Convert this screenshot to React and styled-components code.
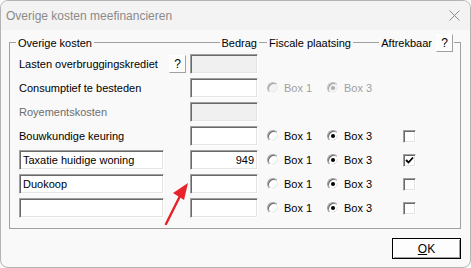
import React from "react";
import styled, { createGlobalStyle, css } from "styled-components";

const Global = createGlobalStyle`
  html, body { margin: 0; padding: 0; background: #f9f9f9; }
  * { box-sizing: border-box; }
`

const Window = styled.div`
  position: relative;
  width: 471px;
  height: 268px;
  border: 1px solid #b4b4b4;
  border-radius: 8px;
  background: #f9f9f9;
  overflow: hidden;
  font-family: "Liberation Sans", Arial, sans-serif;
  font-size: 11px;
  color: #000;
`
const TitleBar = styled.div`
  height: 29px;
  display: flex;
  align-items: center;
  justify-content: space-between;
  padding: 0 10px 0 5px;
  background: #f3f3f3;
`
const Title = styled.span`
  font-size: 12px;
  color: #8a8a8a;
`
const Content = styled.div`
  padding: 4px 9px 0 8px;
`
const GroupHeader = styled.div`
  display: flex;
  align-items: center;
  height: 17px;
`
const HeaderLeft = styled.div`
  width: 248px;
  display: flex;
  align-items: center;
  height: 100%;
`
const Corner = styled.div`
  align-self: flex-end;
  width: 7px;
  height: 9px;
  border-top: 1px solid #a0a0a0;
  ${p => p.side === "left" ? "border-left: 1px solid #a0a0a0; margin-right: 2px;" : "border-right: 1px solid #a0a0a0; margin-left: 1px;"}
`
const Line = styled.div`
  height: 1px;
  background: #a0a0a0;
  flex: ${p => p.width ? "none" : 1};
  width: ${p => p.width ? p.width + "px" : "auto"};
  margin: 0 2px;
`
const HeadLabel = styled.span`
  white-space: nowrap;
`
const Raised = css`
  border: 1px solid;
  border-color: #fff #a0a0a0 #a0a0a0 #fff;
  background: #fdfdfd;
  font: inherit;
  color: #000;
  padding: 0;
  display: flex;
  align-items: center;
  justify-content: center;
`
const HelpButton = styled.button`
  ${Raised}
  width: 17px;
  height: 18px;
  margin-left: ${p => p.left || 0}px;
  font-size: 12px;
`
const GroupBody = styled.div`
  border: 1px solid #a0a0a0;
  border-top: none;
  padding: 3px 0 10px 9px;
  display: flex;
  flex-direction: column;
  gap: 4px;
`
const Row = styled.div`
  display: grid;
  grid-template-columns: 171px 68px 60px 76px auto;
  align-items: center;
  height: 20px;
`
const LabelCell = styled.div`
  display: flex;
  align-items: center;
  padding-right: 4px;
  color: ${p => p.disabled ? "#6d6d6d" : "#000"};
`
const Sunken = css`
  border: 1px solid;
  border-color: #a0a0a0 #fff #fff #a0a0a0;
  box-shadow: inset 1px 1px 0 #696969, inset -1px -1px 0 #e3e3e3;
`
const Field = styled.input`
  ${Sunken}
  width: ${p => p.w}px;
  height: 20px;
  padding: 2px 3px 2px 3px;
  font: inherit;
  color: #000;
  outline: none;
  text-align: ${p => p.right ? "right" : "left"};
  background: ${p => p.disabled ? "#f0f0f0" : "#fff"};
`
const OptionCell = styled.label`
  display: flex;
  align-items: center;
  gap: 5px;
  padding-left: 9px;
  color: ${p => p.disabled ? "#a0a0a0" : "#000"};
`
const Radio = styled.span`
  ${Sunken}
  width: 12px;
  height: 12px;
  border-radius: 50%;
  background: ${p => p.disabled ? "#f0f0f0" : "#fff"};
  display: flex;
  align-items: center;
  justify-content: center;
  opacity: ${p => p.disabled ? 0.6 : 1};
  &::after {
    content: "";
    display: ${p => p.checked ? "block" : "none"};
    width: 4px;
    height: 4px;
    border-radius: 50%;
    background: ${p => p.disabled ? "#7a7a7a" : "#000"};
  }
`
const Check = styled.span`
  ${Sunken}
  width: 13px;
  height: 13px;
  background: #fff;
  display: flex;
  align-items: center;
  justify-content: center;
`
const CheckCell = styled.div`
  padding-left: 9px;
  display: flex;
  align-items: center;
`
const Footer = styled.div`
  display: flex;
  justify-content: flex-end;
  padding-top: 9px;
`
const OkButton = styled.button`
  width: 69px;
  height: 21px;
  border: 1px solid #000;
  padding: 0;
  background: #fdfdfd;
  font: inherit;
  font-size: 12px;
  color: #000;
  box-shadow: inset 1px 1px 0 #fff, inset -1px -1px 0 #a0a0a0;
  & u { text-decoration: underline; }
`
const ArrowMark = styled.svg`
  position: absolute;
  left: 160px;
  top: 178px;
  pointer-events: none;
`

const rows = [
  { label: "Lasten overbruggingskrediet", help: true, amountDisabled: true },
  { label: "Consumptief te besteden", options: "disabled" },
  { label: "Royementskosten", labelDisabled: true, amountDisabled: true },
  { label: "Bouwkundige keuring", options: "on", check: false },
  { name: "Taxatie huidige woning", amount: "949", options: "on", check: true },
  { name: "Duokoop", options: "on", check: false },
  { name: "", options: "on", check: false },
];

const CloseIcon = () => (
  <svg width="11" height="11" viewBox="0 0 11 11">
    <path d="M0.5 0.5 L10.5 10.5 M10.5 0.5 L0.5 10.5" stroke="#8c8c8c" strokeWidth="1" />
  </svg>
)

const App = () => {
  return (
    <>
      <Global />
      <Window>
        <TitleBar>
          <Title>Overige kosten meefinancieren</Title>
          <CloseIcon />
        </TitleBar>
        <Content>
          <GroupHeader>
            <HeaderLeft>
              <Corner side="left" />
              <HeadLabel>Overige kosten</HeadLabel>
              <Line />
              <HeadLabel>Bedrag</HeadLabel>
            </HeaderLeft>
            <Line width={8} />
            <HeadLabel>Fiscale plaatsing</HeadLabel>
            <Line />
            <HeadLabel>Aftrekbaar</HeadLabel>
            <HelpButton left={4}>?</HelpButton>
            <Corner side="right" />
          </GroupHeader>
          <GroupBody>
            {rows.map((r, i) => (
              <Row key={i}>
                {r.name !== undefined ? (
                  <LabelCell>
                    <Field w={145} readOnly defaultValue={r.name} />
                  </LabelCell>
                ) : (
                  <LabelCell disabled={r.labelDisabled}>
                    <span>{r.label}</span>
                    {r.help && <HelpButton style={{ marginLeft: "auto" }}>?</HelpButton>}
                  </LabelCell>
                )}
                <Field w={68} right readOnly disabled={r.amountDisabled} defaultValue={r.amount || ""} />
                {r.options ? (
                  <>
                    <OptionCell disabled={r.options === "disabled"}>
                      <Radio disabled={r.options === "disabled"} />
                      Box 1
                    </OptionCell>
                    <OptionCell disabled={r.options === "disabled"}>
                      <Radio checked disabled={r.options === "disabled"} />
                      Box 3
                    </OptionCell>
                  </>
                ) : (
                  <>
                    <span />
                    <span />
                  </>
                )}
                {r.check !== undefined ? (
                  <CheckCell>
                    <Check>
                      {r.check && (
                        <svg width="9" height="9" viewBox="0 0 9 9">
                          <path d="M1 4 L3.5 6.5 L8 1.5" stroke="#000" strokeWidth="1.8" fill="none" />
                        </svg>
                      )}
                    </Check>
                  </CheckCell>
                ) : <span />}
              </Row>
            ))}
          </GroupBody>
          <Footer>
            <OkButton><u>O</u>K</OkButton>
          </Footer>
        </Content>
        <ArrowMark width="34" height="50" viewBox="0 0 34 50">
          <line x1="5" y1="45" x2="20" y2="15" stroke="#e8232b" strokeWidth="2.4" strokeLinecap="round" />
          <polygon points="27,4 12,14 23,21" fill="#e8232b" />
        </ArrowMark>
      </Window>
    </>
  )
}

export default App
